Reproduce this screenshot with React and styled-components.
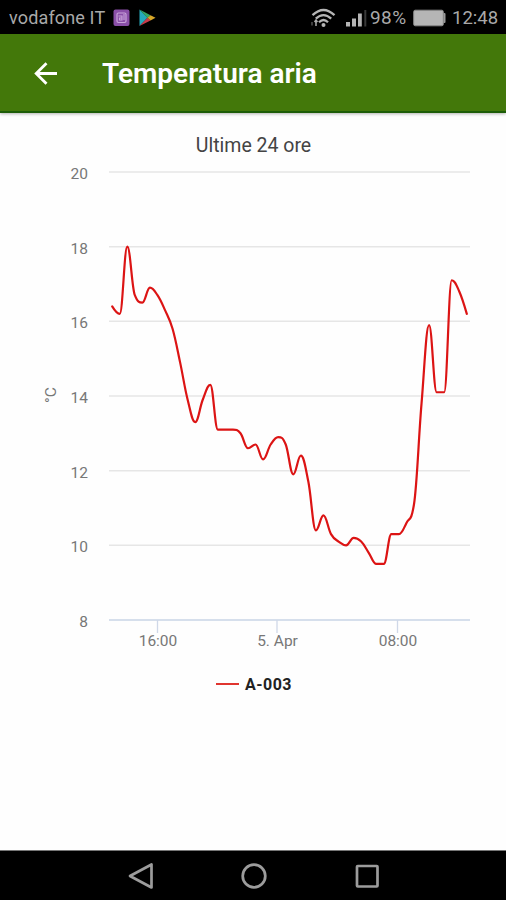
import styled, { createGlobalStyle } from "styled-components";

const GlobalStyle = createGlobalStyle`
  * {
    box-sizing: border-box;
  }
  body {
    margin: 0;
    background: #fff;
    font-family: Roboto, "Liberation Sans", sans-serif;
  }
`;

const Screen = styled.div`
  display: flex;
  flex-direction: column;
  width: 506px;
  height: 900px;
  overflow: hidden;
  background: #fefefe;
`;

const StatusBar = styled.div`
  display: flex;
  align-items: center;
  justify-content: space-between;
  flex: none;
  height: 34px;
  padding: 2px 8px 0 9px;
  background: #000;
  color: #a9a9a9;
  font-size: 18px;
  line-height: 32px;
`;

const StatusGroup = styled.div`
  display: flex;
  align-items: center;
  height: 32px;
  svg {
    display: block;
  }
`;

const StatusText = styled.span`
  width: ${(props) => props.$width}px;
  margin-left: ${(props) => props.$gap || 0}px;
  font-size: ${(props) => props.$size || 18}px;
  letter-spacing: ${(props) => props.$spacing || 0}px;
  white-space: nowrap;
`;

const AppBar = styled.header`
  display: flex;
  align-items: center;
  flex: none;
  height: 79px;
  padding: 2px 34px 0;
  background: #43780a;
  border-bottom: 2px solid #1d5d08;
  box-shadow: 0 1px 3px rgba(0, 0, 0, 0.3);
`;

const Title = styled.h1`
  margin: 0 0 0 45px;
  color: #fff;
  font-size: 28px;
  font-weight: 600;
  line-height: 36px;
  white-space: nowrap;
`;

const Content = styled.main`
  flex: 1;
  padding-top: 21px;
`;

const ChartTitle = styled.h2`
  margin: 0;
  padding-left: 1px;
  color: #444;
  font-size: 19.5px;
  font-weight: 400;
  line-height: 24px;
  text-align: center;
`;

const Chart = styled.svg`
  display: block;
  font-family: Roboto, "Liberation Sans", sans-serif;
  font-size: 15.5px;
  fill: #777;
`;

const Legend = styled.div`
  display: flex;
  align-items: center;
  justify-content: center;
  gap: 6px;
  height: 24px;
  margin-top: 14px;
  padding-left: 2px;
  color: #222;
  font-size: 16px;
  font-weight: 700;
  letter-spacing: 0.45px;
`;

const LegendLine = styled.span`
  width: 23px;
  height: 2px;
  background: #e0352f;
`;

const NavBar = styled.nav`
  display: flex;
  align-items: center;
  justify-content: center;
  flex: none;
  height: 50px;
  padding-left: 2px;
  background: #000;
  border-top: 1px solid #777;
  gap: 85px;
`;

const values = [
  16.4, 16.2, 18, 16.7, 16.5, 16.9, 16.7, 16.3, 15.8, 14.9, 13.9, 13.3, 13.9,
  14.3, 13.1, 13.1, 13.1, 13.0, 12.6, 12.7, 12.3, 12.7, 12.9, 12.7, 11.9, 12.4,
  11.7, 10.4, 10.8, 10.3, 10.1, 10.0, 10.2, 10.1, 9.8, 9.5, 9.5, 10.3, 10.3,
  10.6, 11.1, 13.8, 15.9, 14.1, 14.1, 17.1, 16.8, 16.2,
];

const yTicks = [20, 18, 16, 14, 12, 10, 8];
const xTicks = [
  { x: 157.5, label: "16:00" },
  { x: 277, label: "5. Apr" },
  { x: 397.5, label: "08:00" },
];

const TOP = 14;
const toX = (i) => 112.2 + i * 7.545;
const toY = (value) => TOP + (20 - value) * 37.33;

const splinePath = (points) => {
  let path = `M ${points[0].x} ${points[0].y}`;
  let right = points[0];

  for (let i = 1; i < points.length; i++) {
    const last = points[i - 1];
    const point = points[i];
    const next = points[i + 1];
    let left = point;
    let nextRight = point;

    if (next) {
      const leftX = (1.5 * point.x + last.x) / 2.5;
      const rightX = (1.5 * point.x + next.x) / 2.5;
      let leftY = (1.5 * point.y + last.y) / 2.5;
      let rightY = (1.5 * point.y + next.y) / 2.5;
      const correction =
        ((rightY - leftY) * (rightX - point.x)) / (rightX - leftX) +
        point.y -
        rightY;
      leftY += correction;
      rightY += correction;

      // keep the control points between neighbours so peaks don't overshoot
      if (leftY > last.y && leftY > point.y) {
        leftY = Math.max(last.y, point.y);
        rightY = 2 * point.y - leftY;
      } else if (leftY < last.y && leftY < point.y) {
        leftY = Math.min(last.y, point.y);
        rightY = 2 * point.y - leftY;
      }
      if (rightY > next.y && rightY > point.y) {
        rightY = Math.max(next.y, point.y);
        leftY = 2 * point.y - rightY;
      } else if (rightY < next.y && rightY < point.y) {
        rightY = Math.min(next.y, point.y);
        leftY = 2 * point.y - rightY;
      }
      left = { x: leftX, y: leftY };
      nextRight = { x: rightX, y: rightY };
    }

    path += ` C ${right.x} ${right.y} ${left.x} ${left.y} ${point.x} ${point.y}`;
    right = nextRight;
  }
  return path;
};

const line = splinePath(values.map((value, i) => ({ x: toX(i), y: toY(value) })));

const Badge = styled.svg`
  margin-left: ${(props) => props.$gap}px;
`;

const AppBadge = () => (
  <Badge $gap={8} width="17" height="18" viewBox="0 0 17 18">
    <rect x="0.5" y="0.5" width="16" height="16.5" rx="2" fill="#8a4fa8" />
    <rect x="4" y="4" width="9" height="9.5" rx="1.5" fill="none" stroke="#c9a4da" strokeWidth="1.2" />
    <path d="M5.5 7h3.5v4H6.5V9H9M11 5v6" fill="none" stroke="#c9a4da" strokeWidth="1.1" />
  </Badge>
);

const PlayBadge = () => (
  <Badge $gap={9} width="17" height="18" viewBox="0 0 17 18">
    <path d="M0.5 0.5v16.5l8-8.3z" fill="#25a9bd" />
    <path d="M0.5 0.5l11 5.7-3 2.7z" fill="#35a566" />
    <path d="M0.5 17l11-5.6-3-2.7z" fill="#c93c4c" />
    <path d="M11.5 6.2l5 2.6-5 2.6-3-2.6z" fill="#d7a628" />
  </Badge>
);

const WifiIcon = () => (
  <svg width="26" height="20" viewBox="0 0 26 20">
    <g fill="none" stroke="#b5b5b5" strokeWidth="2.3">
      <path d="M2.5 7.2Q13.5-3.3 24.5 7.2" />
      <path d="M5.8 10.7Q13.5 3.5 21.2 10.7" />
      <path d="M9 14.2Q13.5 9.8 18 14.2" />
    </g>
    <circle cx="13.5" cy="17" r="2" fill="#b5b5b5" />
    <path d="M6 12v6M4.5 14l1.5-2 1.5 2" stroke="#aaa" strokeWidth="1.5" fill="none" />
    <path d="M2 14v3.5" stroke="#444" strokeWidth="1.8" />
  </svg>
);

const SignalIcon = () => (
  <Badge $gap={9} width="22" height="18" viewBox="0 0 22 18">
    <path d="M1 13h4v4.5H1zM7 9.5h4v8H7zM13 4.5h3.8v13H13z" fill="#b5b5b5" />
    <path d="M19.3 1h2v16.5h-2z" fill="#393939" />
  </Badge>
);

const BatteryIcon = () => (
  <Badge $gap={5} width="33" height="18" viewBox="0 0 33 18">
    <rect x="0.7" y="1.2" width="29.6" height="15.6" rx="1.5" fill="#b5b5b5" stroke="#888" />
    <path d="M30.5 4h1q1 0 1 1v8q0 1-1 1h-1z" fill="#999" />
  </Badge>
);

const BackArrow = () => (
  <svg width="23" height="23" viewBox="0 0 23 23">
    <path d="M12.5 1.2L2.2 11.5l10.3 10.3M2.2 11.5H23" fill="none" stroke="#fff" strokeWidth="2.8" />
  </svg>
);

const NavIcon = ({ children }) => (
  <svg width="28" height="28" viewBox="0 0 28 28" fill="none" stroke="#9c9c9c" strokeWidth="2.7">
    {children}
  </svg>
);

const App = () => {
  return (
    <Screen>
      <GlobalStyle />
      <StatusBar>
        <StatusGroup>
          <StatusText $width={96} $spacing={0.15}>vodafone IT</StatusText>
          <AppBadge />
          <PlayBadge />
        </StatusGroup>
        <StatusGroup>
          <WifiIcon />
          <SignalIcon />
          <StatusText $width={38} $gap={3} $size={19} $spacing={0.4}>98%</StatusText>
          <BatteryIcon />
          <StatusText $width={46} $gap={6} $size={18.5}>12:48</StatusText>
        </StatusGroup>
      </StatusBar>
      <AppBar>
        <BackArrow />
        <Title>Temperatura aria</Title>
      </AppBar>
      <Content>
        <ChartTitle>Ultime 24 ore</ChartTitle>
        <Chart width="506" height="500" viewBox="0 0 506 500">
          {yTicks.map((tick) => (
            <g key={tick}>
              <path
                d={`M109 ${toY(tick)}H470`}
                stroke={tick === 8 ? "#c9d4e6" : "#e6e6e6"}
                strokeWidth="1.5"
              />
              <text x="88" y={toY(tick) + 7} textAnchor="end">
                {tick}
              </text>
            </g>
          ))}
          {xTicks.map(({ x, label }) => (
            <g key={label}>
              <path d={`M${x} 462v13`} stroke="#cfd8e8" strokeWidth="1.3" />
              <text x={x + 0.5} y="487.5" textAnchor="middle">
                {label}
              </text>
            </g>
          ))}
          <text transform="translate(56 237) rotate(-90)" textAnchor="middle">
            °C
          </text>
          <path
            d={line}
            fill="none"
            stroke="#dc1414"
            strokeWidth="2.2"
            strokeLinejoin="round"
            strokeLinecap="round"
          />
        </Chart>
        <Legend>
          <LegendLine />
          <span>A-003</span>
        </Legend>
      </Content>
      <NavBar>
        <NavIcon>
          <path d="M24.5 2.5v23L3 14z" strokeLinejoin="round" />
        </NavIcon>
        <NavIcon>
          <circle cx="14" cy="14" r="11.3" />
        </NavIcon>
        <NavIcon>
          <rect x="4" y="4" width="20.5" height="20.5" rx="0.8" />
        </NavIcon>
      </NavBar>
    </Screen>
  );
};

export default App;
